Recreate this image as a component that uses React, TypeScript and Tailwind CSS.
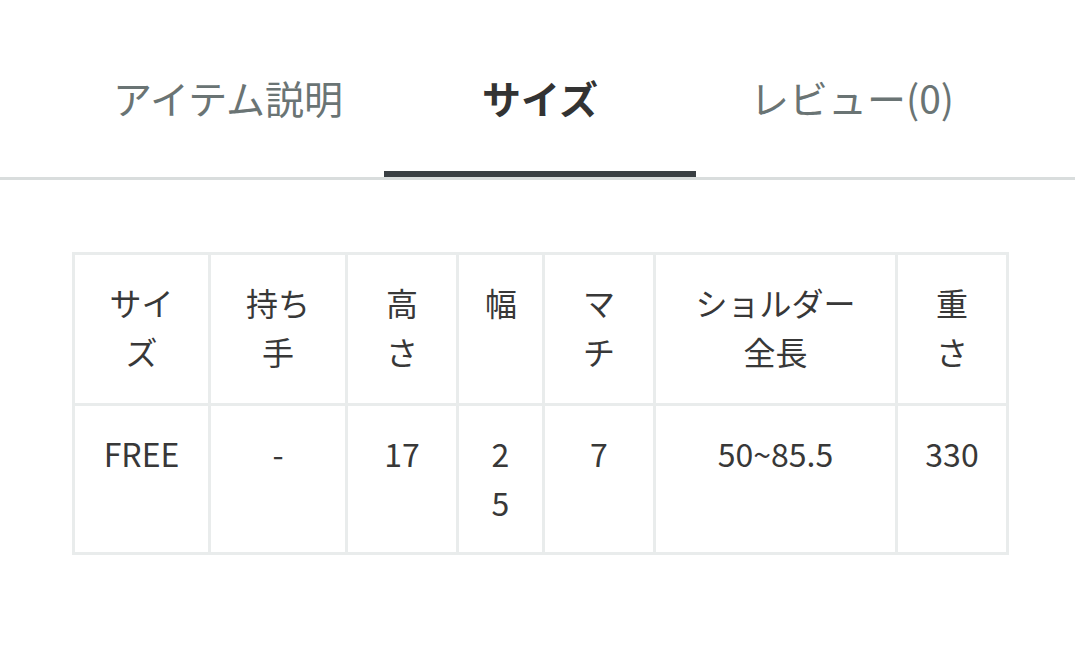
import React from 'react';

const FONT = { fontFamily: '"Noto Sans CJK JP", "Noto Sans", sans-serif' };

const TABS = ['アイテム説明', 'サイズ', 'レビュー(0)'];
const ACTIVE_TAB = 1;

// column widths taken from the size table
const COLS = [136, 137, 111, 86, 111, 242, 111];
const HEAD = ['サイズ', '持ち手', '高さ', '幅', 'マチ', 'ショルダー全長', '重さ'];
const ROW = ['FREE', '-', '17', '25', '7', '50~85.5', '330'];

const App: React.FC = () => {
  return (
    <div className="w-[1075px] h-[652px] bg-white overflow-hidden" style={FONT}>
      <div className="border-b-[3px] border-[#d9dddd]">
        <div className="ml-[72px] w-[936px] flex">
          {TABS.map((t, i) => (
            <div
              key={t}
              className={`w-[312px] h-[177px] flex items-center justify-center pt-[24px] text-[39px] border-b-[6px] ${
                i === ACTIVE_TAB
                  ? 'border-[#3a3f43] text-[#333333] font-bold'
                  : 'border-transparent text-[#6a7474]'
              }`}
            >
              {t}
            </div>
          ))}
        </div>
      </div>

      <div className="ml-[72px] mt-[72px]">
        <table className="table-fixed border-collapse w-[936px] text-[32px] leading-[49px] text-[#383838]">
          <colgroup>
            {COLS.map((w, i) => (
              <col key={i} style={{ width: w }} />
            ))}
          </colgroup>
          <tbody>
            <tr className="h-[151px]">
              {HEAD.map((h) => (
                <td
                  key={h}
                  className="border-[3px] border-[#e9ecec] px-[26px] pt-[23px] text-center align-top break-all"
                >
                  {h}
                </td>
              ))}
            </tr>
            <tr className="h-[149px]">
              {ROW.map((v, i) => (
                <td
                  key={i}
                  className="border-[3px] border-[#e9ecec] px-[26px] pt-[23px] text-center align-top break-all"
                >
                  {v}
                </td>
              ))}
            </tr>
          </tbody>
        </table>
      </div>
    </div>
  );
};

export default App;
